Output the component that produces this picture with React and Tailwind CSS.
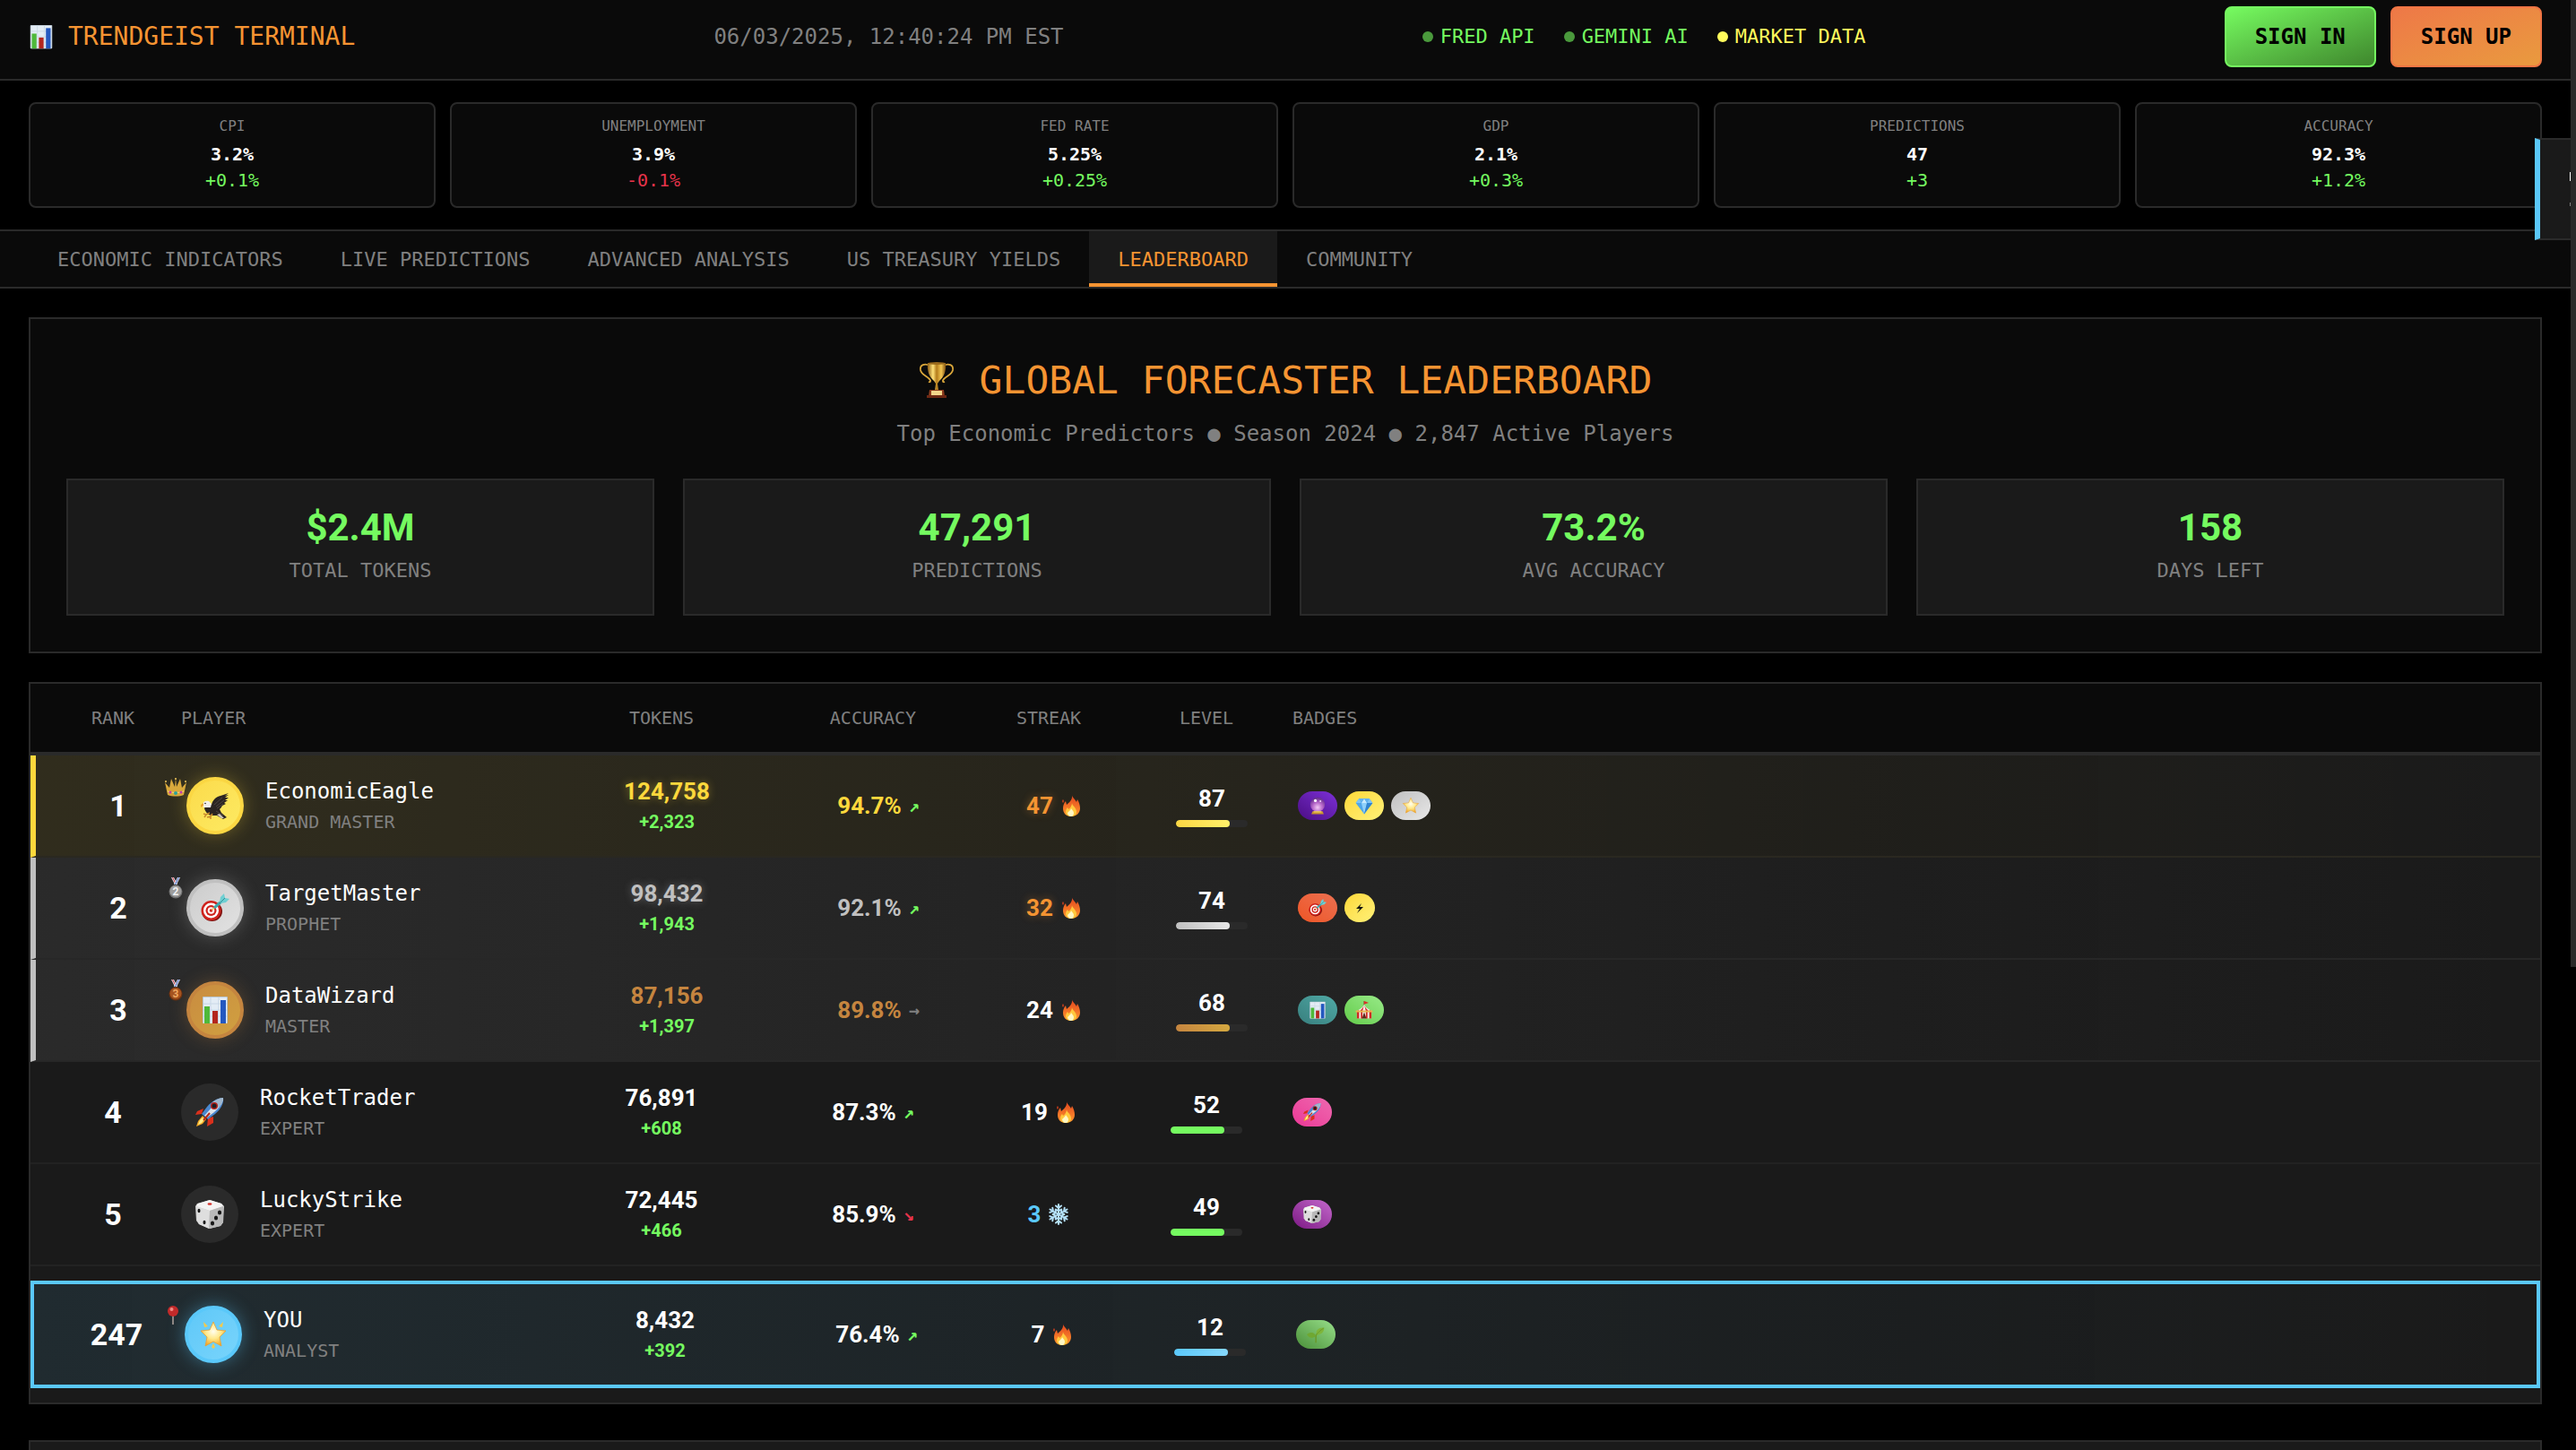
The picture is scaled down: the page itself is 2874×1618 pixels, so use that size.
import React, { useState } from 'react';

const Chart = ({ className }) => (
  <svg className={className} viewBox="0 0 32 32" aria-hidden="true">
    <rect x="2" y="1" width="28" height="30" rx="1" fill="#b9c6d0" />
    <rect x="3" y="2" width="26" height="29" fill="#e3ecf5" />
    <path d="M3 9h26M3 16h26M3 23h26M11 2v29M20 2v29" stroke="#c9d8e6" strokeWidth="1" />
    <rect x="4" y="12" width="6" height="19" fill="#4fb93a" />
    <rect x="13" y="17" width="6" height="14" fill="#b3261e" />
    <rect x="22" y="5" width="6" height="26" fill="#2458c0" />
  </svg>
);

const Trophy = ({ className }) => (
  <svg className={className} viewBox="0 0 40 40" aria-hidden="true">
    <defs>
      <linearGradient id="cup" x1="0" x2="1" y1="0" y2="0">
        <stop offset="0" stopColor="#8a5a12" />
        <stop offset=".3" stopColor="#ffe27a" />
        <stop offset=".5" stopColor="#b37b1b" />
        <stop offset=".75" stopColor="#f3c650" />
        <stop offset="1" stopColor="#7d4d0e" />
      </linearGradient>
    </defs>
    <path d="M12 4C7 1 1 3 2 9c1 5 6 6 10 10 2 2 1 4-1 3M28 4c5-3 11-1 10 5-1 5-6 6-10 10-2 2-1 4 1 3" fill="none" stroke="#d9a63a" strokeWidth="1.800" />
    <path d="M10 1h20c1 9-2 16-7 20l-2 3 1 8h-4l1-8-2-3C12 17 9 10 10 1z" fill="url(#cup)" />
    <ellipse cx="20" cy="1.500" rx="10" ry="1.500" fill="#9a6a1c" />
    <path d="M12 31h16l1 7H11z" fill="#8b3a1c" />
    <rect x="14" y="32" width="12" height="5" fill="#f2d58a" />
    <path d="M9 37h22v3H9z" fill="#6d2814" />
  </svg>
);

const Crown = ({ className }) => (
  <svg className={className} viewBox="0 0 24 24" aria-hidden="true">
    <path d="M3 22L0 8l5 6 2-10 4 9 1-10 1 10 4-9 2 10 5-6-3 14c-5 2-13 2-18 0z" fill="#d9a93c" />
    <path d="M3 18c5 2 13 2 18 0" fill="none" stroke="#f8dc7c" strokeWidth="1" />
    <circle cx="12" cy="20" r="2" fill="#2ba39a" />
    <circle cx="6" cy="19" r="1.500" fill="#c23bb0" />
    <circle cx="18" cy="19" r="1.500" fill="#c23bb0" />
    <circle cx="1" cy="7" r="1" fill="#f3c95c" />
    <circle cx="23" cy="7" r="1" fill="#f3c95c" />
    <circle cx="12" cy="4" r="1" fill="#f3c95c" />
  </svg>
);

const Medal = ({ className, place, light, dark, ink }) => (
  <svg className={className} viewBox="0 0 24 24" aria-hidden="true">
    <path d="M7 0h3l4 8h-3z" fill="#d8dcec" />
    <path d="M8 0h1l4 8h-1z" fill="#d23b3b" />
    <path d="M17 0h-3l-4 8h3z" fill="#e8ebf5" />
    <path d="M16 0h-1l-4 8h1z" fill="#3a5fc2" />
    <circle cx="12" cy="16" r="7.500" fill={dark} />
    <circle cx="12" cy="15.500" r="6.500" fill={light} />
    <text x="12" y="20" textAnchor="middle" fontSize="12" fontWeight="700" fontFamily="Roboto, sans-serif" fill={ink}>
      {place}
    </text>
  </svg>
);

const Silver = ({ className }) => <Medal className={className} place="2" light="#9d9d9d" dark="#6f6f6f" ink="#f1f1f1" />;
const Bronze = ({ className }) => <Medal className={className} place="3" light="#a5531f" dark="#6e3210" ink="#f0a860" />;

const Pin = ({ className }) => (
  <svg className={className} viewBox="0 0 24 24" aria-hidden="true">
    <rect x="10" y="11" width="2" height="12" fill="#8d8683" />
    <circle cx="11" cy="8" r="6" fill="#c22a2a" />
    <circle cx="9.500" cy="6" r="2" fill="#f08a84" />
  </svg>
);

const Eagle = ({ className }) => (
  <svg className={className} viewBox="0 0 32 32" aria-hidden="true">
    <path d="M12 15c1-5 5-9 10-10l9-3-4 3 4-1-4 3 4 0-4 3 3 0-4 3 2 1-4 2c-1 2-2 3-3 4l2 4 6 5-4 2-7-4-6 0c-4-1-7-4-8-8l2-4z" fill="#2b2422" />
    <path d="M15 15l9-8M17 17l9-7M18 19l7-5M17 22l8 5" stroke="#574c47" strokeWidth=".8" />
    <path d="M2 14c1-3 4-4 7-3l3 3-1 4-5 0-3 0z" fill="#f3efe9" />
    <path d="M3 13l-3 2 0 3 3-2z" fill="#eba52c" />
    <circle cx="5" cy="13.500" r=".8" fill="#222" />
    <path d="M10 24l-4 2-3-1m3 1l-2 3m9-4l-2 3-4 1m4-1l0 3" fill="none" stroke="#c98a2b" strokeWidth="1.500" />
    <path d="M21 25l5 5-3 0-5-4z" fill="#cfc6bd" />
  </svg>
);

const Target = ({ className }) => (
  <svg className={className} viewBox="0 0 32 32" aria-hidden="true">
    <ellipse cx="12.500" cy="20" rx="11.500" ry="11" fill="#7d1210" />
    <circle cx="11.500" cy="19" r="11" fill="#cf231d" />
    <circle cx="11.500" cy="19" r="8.500" fill="#fff" />
    <circle cx="11.500" cy="19" r="6" fill="#cf231d" />
    <circle cx="11.500" cy="19" r="3.800" fill="#fff" />
    <circle cx="11.500" cy="19" r="1.800" fill="#cf231d" />
    <path d="M12 18.500L22 10" stroke="#e8c15a" strokeWidth="1.500" />
    <path d="M15 16l8-7" stroke="#3fa7ad" strokeWidth="3" />
    <path d="M21 10l1-6 4-4 1 5 5 1-4 4-6 1z" fill="#6fcfd2" />
    <path d="M21 11l6-6" stroke="#2f8e96" strokeWidth="1" />
  </svg>
);

const Rocket = ({ className }) => (
  <svg className={className} viewBox="0 0 32 32" aria-hidden="true">
    <path d="M9 12l-7 3-2 4 7-1zM20 21l0 7-7 4 1-9z" fill="#d9301c" />
    <path d="M8 20l4 4-4 5-7 3 2-6z" fill="#f7a823" />
    <path d="M8 22l2 2-3 4-4 2 2-5z" fill="#fff08a" />
    <path d="M31 0c1 6-3 13-9 18l-8 6-7-6 6-8C18 4 25 0 31 0z" fill="#4a87cf" />
    <path d="M31 0c0 5-4 11-10 16l-8 6-3-2 8-9C22 6 26 2 31 0z" fill="#dbe3ea" />
    <path d="M31 0c-4 0-9 2-12 5l7 6c3-3 5-7 5-11z" fill="#9fb6cc" />
    <circle cx="21" cy="9" r="4" fill="#b3231c" />
    <circle cx="21" cy="9" r="2.500" fill="#1d1d24" />
    <path d="M16 17l-7 8" stroke="#b5281a" strokeWidth="2" />
  </svg>
);

const Dice = ({ className }) => (
  <svg className={className} viewBox="0 0 32 32" aria-hidden="true">
    <path d="M16 0l13 4 3 3-1 18-3 4-12 3-12-5-3-4L0 7l2-3z" fill="#cfcfcf" />
    <path d="M16 0l13 4 2 3-15 5L1 7l2-3z" fill="#f4f4f4" />
    <path d="M1 7l15 5-1 20L4 27l-2-4z" fill="#dedede" />
    <path d="M31 7l-15 5-1 20 13-3 3-4z" fill="#b9b9b9" />
    <ellipse cx="16" cy="4.500" rx="2.500" ry="1.300" fill="#d5302a" />
    <ellipse cx="4" cy="12" rx="1.500" ry="2.300" fill="#161616" />
    <ellipse cx="10" cy="25" rx="1.500" ry="2.300" fill="#161616" />
    <ellipse cx="27" cy="14" rx="2.100" ry="2.500" fill="#161616" />
    <ellipse cx="23" cy="20" rx="2.100" ry="2.500" fill="#161616" />
    <ellipse cx="19" cy="26" rx="2.100" ry="2.500" fill="#161616" />
  </svg>
);

const StarShape = () => (
  <>
    <defs>
      <radialGradient id="starFill" cx=".5" cy=".4" r=".6">
        <stop offset="0" stopColor="#fffef0" />
        <stop offset=".5" stopColor="#ffe98a" />
        <stop offset="1" stopColor="#f0a52a" />
      </radialGradient>
    </defs>
    <path d="M16 2l4 9 10 1-7 7 2 10-9-5-9 5 2-10-7-7 10-1z" fill="url(#starFill)" stroke="#e8a033" strokeWidth=".8" strokeLinejoin="round" />
  </>
);

const Star = ({ className }) => (
  <svg className={className} viewBox="0 0 32 32" aria-hidden="true">
    <StarShape />
  </svg>
);

const GlowStar = ({ className }) => (
  <svg className={className} viewBox="0 0 32 32" aria-hidden="true">
    <StarShape />
    <path d="M5 2l5 5-4 1zM27 2l-5 5 4 1zM16 26l2 4-2 2-2-2z" fill="#f7c948" />
  </svg>
);

const Fire = ({ className }) => (
  <svg className={className} viewBox="0 0 24 24" aria-hidden="true">
    <defs>
      <linearGradient id="flame" x1="0" x2="0" y1="0" y2="1">
        <stop offset="0" stopColor="#e2431e" />
        <stop offset="1" stopColor="#ff9a2e" />
      </linearGradient>
    </defs>
    <path d="M13 0c0 3 4 5 5 8l1-3c2 3 3 7 3 10 0 5-4 9-10 9S3 20 3 15c0-3 1-6 3-8l1 4c2-2 7-5 6-11z" fill="url(#flame)" />
    <path d="M3 5c1 1 1 3 0 4-1-1-1-3 0-4z" fill="#e2431e" />
    <path d="M13 9c0 3 5 5 5 10 0 3-3 5-6 5s-6-2-6-5c0-2 1-4 2-5l1 2c2-1 4-4 4-7z" fill="#ffc83d" />
    <path d="M12 15c1 2 3 3 3 5s-1 4-3 4-4-2-4-4l2-2c1-1 2-2 2-3z" fill="#fff7c4" />
  </svg>
);

const Snowflake = ({ className }) => (
  <svg className={className} viewBox="0 0 24 24" fill="none" stroke="#b4e0f8" strokeWidth="2" strokeLinecap="round" aria-hidden="true">
    {[0, 60, 120, 180, 240, 300].map((deg) => (
      <g key={deg} transform={`rotate(${deg} 12 12)`}>
        <path d="M12 12V1M12 5l-3-2.500M12 5l3-2.500M12 8.500l-3-2M12 8.500l3-2" />
      </g>
    ))}
  </svg>
);

const CrystalBall = ({ className }) => (
  <svg className={className} viewBox="0 0 32 32" aria-hidden="true">
    <defs>
      <radialGradient id="ball" cx=".5" cy=".7" r=".7">
        <stop offset="0" stopColor="#f3c8f5" />
        <stop offset=".5" stopColor="#b565c8" />
        <stop offset="1" stopColor="#5b2a86" />
      </radialGradient>
    </defs>
    <circle cx="16" cy="14" r="13" fill="url(#ball)" />
    <circle cx="12" cy="7" r="2.500" fill="#fff" />
    <circle cx="21" cy="8" r="1.500" fill="#f6dcff" />
    <path d="M7 26h18l2 5H5z" fill="#c9952f" />
    <path d="M9 26h14v2H9z" fill="#f2cf6b" />
  </svg>
);

const Gem = ({ className }) => (
  <svg className={className} viewBox="0 0 32 32" aria-hidden="true">
    <path d="M7 3h18l6 8-15 20L1 11z" fill="#4fa6ea" />
    <path d="M7 3l4 8H1zM25 3l-4 8h10z" fill="#7fc4f5" />
    <path d="M11 11h10l-5 20z" fill="#8fd0fa" />
    <path d="M11 11l5-8 5 8z" fill="#c9ebff" />
    <path d="M7 3h9l-5 8zM25 3h-9l5 8z" fill="#62b2ee" />
    <path d="M21 11h10L16 31z" fill="#3183cf" />
  </svg>
);

const Bolt = ({ className }) => (
  <svg className={className} viewBox="0 0 10 20" aria-hidden="true">
    <path d="M7 5L1 11l4 0-3 5 7-7-4 0z" fill="#111" />
  </svg>
);

const Circus = ({ className }) => (
  <svg className={className} viewBox="0 0 32 32" aria-hidden="true">
    <path d="M16 0l8 3-8 3z" fill="#d9302a" />
    <path d="M15 0h1v9h-1z" fill="#8a5a32" />
    <path d="M16 6c2 5 6 8 14 12H2C10 14 14 11 16 6z" fill="#f6eee6" />
    <path d="M16 6l-3 12H8c4-4 7-7 8-12zM16 6c1 5 4 8 8 12h-5zM2 18l5-2-1 2zM30 18l-5-2 1 2z" fill="#cf2b26" />
    <path d="M3 19h26v12H3z" fill="#f6eee6" />
    <path d="M3 19h4v12H3zM10 19h3v12h-3zM19 19h3v12h-3zM25 19h4v12h-4z" fill="#cf2b26" />
    <path d="M16 20l4 11h-8z" fill="#5d2a1c" />
    <path d="M1 17h30v3H1z" fill="#e7b64d" />
  </svg>
);

const Seedling = ({ className }) => (
  <svg className={className} viewBox="0 0 32 32" aria-hidden="true">
    <path d="M16 30c1-6-1-9 1-14" fill="none" stroke="#6a9a2c" strokeWidth="2.500" strokeLinecap="round" />
    <path d="M17 17C15 8 22 3 31 4c0 8-6 13-14 13z" fill="#7fb53a" />
    <path d="M17 17c3-5 8-9 13-12" stroke="#5d8f24" strokeWidth="1" fill="none" />
    <path d="M16 19C14 12 7 11 0 16c3 6 10 8 16 3z" fill="#6fa832" />
  </svg>
);

const sources = [
  { name: 'FRED API', text: 'text-[#75fb60]', dot: 'bg-[#4a993c]' },
  { name: 'GEMINI AI', text: 'text-[#75fb60]', dot: 'bg-[#4a993c]' },
  { name: 'MARKET DATA', text: 'text-[#fffb5c]', dot: 'bg-[#fffb5c]' },
];

const tickers = [
  { label: 'CPI', value: '3.2%', change: '+0.1%' },
  { label: 'UNEMPLOYMENT', value: '3.9%', change: '-0.1%' },
  { label: 'FED RATE', value: '5.25%', change: '+0.25%' },
  { label: 'GDP', value: '2.1%', change: '+0.3%' },
  { label: 'PREDICTIONS', value: '47', change: '+3' },
  { label: 'ACCURACY', value: '92.3%', change: '+1.2%' },
];

const tabs = ['ECONOMIC INDICATORS', 'LIVE PREDICTIONS', 'ADVANCED ANALYSIS', 'US TREASURY YIELDS', 'LEADERBOARD', 'COMMUNITY'];

const stats = [
  { value: '$2.4M', label: 'TOTAL TOKENS' },
  { value: '47,291', label: 'PREDICTIONS' },
  { value: '73.2%', label: 'AVG ACCURACY' },
  { value: '158', label: 'DAYS LEFT' },
];

const goldFill = 'bg-linear-to-br from-[#fdd835] to-[#fff176]';
const silverFill = 'bg-linear-to-br from-[#c0c0c0] to-[#e8e8e8]';
const plainRow = 'border-b-2 border-b-[#222222]';

const players = [
  {
    rank: 1, name: 'EconomicEagle', title: 'GRAND MASTER', tokens: '124,758', gain: '+2,323', accuracy: '94.7%', trend: 'up', streak: 47, level: 87,
    row: 'border-b-2 border-b-[#2a2820] border-l-6 border-l-[#fdd83c] bg-linear-to-r from-[#fdd83c]/10 to-transparent',
    avatar: 'border-4 border-[#fbd743] bg-linear-to-br from-[#fbdb4b] to-[#fdea62] shadow-[0_0_20px_rgba(253,216,60,0.3)]',
    icon: Eagle, mark: Crown,
    score: 'text-[#fdd83c] [text-shadow:0_0_10px_rgba(253,216,60,0.4)]', acc: 'text-[#fdd83c]', hot: true,
    bar: 'bg-linear-to-r from-[#fbd743] to-[#fff06a]',
    badges: [
      { icon: CrystalBall, fill: 'bg-linear-to-tr from-[#4b0d84] to-[#7d30d8]' },
      { icon: Gem, fill: goldFill },
      { icon: Star, fill: silverFill },
    ],
  },
  {
    rank: 2, name: 'TargetMaster', title: 'PROPHET', tokens: '98,432', gain: '+1,943', accuracy: '92.1%', trend: 'up', streak: 32, level: 74,
    row: 'border-b-2 border-b-[#272727] border-l-6 border-l-[#c0c0c0] bg-linear-to-r from-[#c0c0c0]/10 to-transparent',
    avatar: 'border-4 border-[#c0c0c0] bg-linear-to-br from-[#cccccc] to-[#e2e2e2] shadow-[0_0_20px_rgba(192,192,192,0.3)]',
    icon: Target, mark: Silver,
    score: 'text-[#c0c0c0] [text-shadow:0_0_10px_rgba(192,192,192,0.4)]', acc: 'text-[#c0c0c0]', hot: true,
    bar: 'bg-linear-to-r from-[#c0c0c0] to-[#e8e8e8]',
    badges: [
      { icon: Target, fill: 'bg-linear-to-tr from-[#ee5523] to-[#ec7050]' },
      { icon: Bolt, fill: goldFill, narrow: true },
    ],
  },
  {
    rank: 3, name: 'DataWizard', title: 'MASTER', tokens: '87,156', gain: '+1,397', accuracy: '89.8%', trend: 'flat', streak: 24, level: 68,
    row: 'border-b-2 border-b-[#272727] border-l-6 border-l-[#c0c0c0] bg-linear-to-r from-[#c0c0c0]/10 to-transparent',
    avatar: 'border-4 border-[#c5853f] bg-linear-to-br from-[#c98c40] to-[#d0a040] shadow-[0_0_20px_rgba(197,133,63,0.3)]',
    icon: Chart, mark: Bronze,
    score: 'text-[#c5853f]', acc: 'text-[#c5853f]',
    bar: 'bg-linear-to-r from-[#c5853f] to-[#d4a840]',
    badges: [
      { icon: Chart, fill: 'bg-linear-to-tr from-[#387f7e] to-[#50aaa6]' },
      { icon: Circus, fill: 'bg-linear-to-tr from-[#62cc48] to-[#98ea88]' },
    ],
  },
  {
    rank: 4, name: 'RocketTrader', title: 'EXPERT', tokens: '76,891', gain: '+608', accuracy: '87.3%', trend: 'up', streak: 19, level: 52,
    row: plainRow, avatar: 'bg-[#2a2a2a]', icon: Rocket, score: 'text-white', acc: 'text-white', bar: 'bg-[#75fb60]',
    badges: [{ icon: Rocket, fill: 'bg-linear-to-tr from-[#eb3596] to-[#ee68b0]' }],
  },
  {
    rank: 5, name: 'LuckyStrike', title: 'EXPERT', tokens: '72,445', gain: '+466', accuracy: '85.9%', trend: 'down', streak: 3, cold: true, level: 49,
    row: plainRow, avatar: 'bg-[#2a2a2a]', icon: Dice, score: 'text-white', acc: 'text-white', bar: 'bg-[#75fb60]',
    badges: [{ icon: Dice, fill: 'bg-linear-to-tr from-[#7c1584] to-[#c468cc]' }],
  },
  {
    rank: 247, name: 'YOU', title: 'ANALYST', tokens: '8,432', gain: '+392', accuracy: '76.4%', trend: 'up', streak: 7, level: 12,
    row: 'my-4 border-4 border-[#5ac8fa] bg-linear-to-r from-[#5ac8fa]/10 to-transparent',
    avatar: 'border-4 border-[#5ac8fa] bg-linear-to-br from-[#5fc8f8] to-[#78d4fb] shadow-[0_0_20px_rgba(90,200,250,0.4)]',
    icon: GlowStar, mark: Pin, score: 'text-white', acc: 'text-white',
    bar: 'bg-linear-to-r from-[#5ac8fa] to-[#85d8fd]',
    badges: [{ icon: Seedling, fill: 'bg-linear-to-tr from-[#4a8f38] to-[#98e08a]' }],
  },
];

const trends = {
  up: { glyph: '↗', color: 'text-[#75fb60]' },
  down: { glyph: '↘', color: 'text-[#e6334a]' },
  flat: { glyph: '→', color: 'text-[#808080]' },
};

const columns = 'grid grid-cols-[120px_400px_240px_200px_160px_160px_1fr] items-center gap-4 px-8';

function PlayerRow({ player }) {
  const Icon = player.icon;
  const Mark = player.mark;
  const trend = trends[player.trend];
  const streakColor = player.hot
    ? 'text-[#f59432] [text-shadow:0_0_10px_rgba(245,148,50,0.4)]'
    : player.cold
      ? 'text-[#5ac8fa]'
      : 'text-white';

  return (
    <tr className={`${columns} h-[114px] ${player.rank === 247 ? 'min-h-[120px]' : ''} ${player.row}`}>
      <td className="text-center font-[Roboto,sans-serif] text-[34px] leading-10 font-bold">{player.rank}</td>
      <td className="flex items-center gap-6">
        <div className={`relative flex size-16 items-center justify-center rounded-full ${player.avatar}`}>
          <Icon className="size-8" />
          {Mark && <Mark className="absolute -top-1.5 -left-7 size-6" />}
        </div>
        <div>
          <div className="text-[24px] leading-9">{player.name}</div>
          <div className="text-[20px] leading-8 text-[#808080]">{player.title}</div>
        </div>
      </td>
      <td className="text-center font-[Roboto,sans-serif] font-bold">
        <div className={`text-[26px] leading-9 ${player.score}`}>{player.tokens}</div>
        <div className="text-[20px] leading-8 text-[#75fb60]">{player.gain}</div>
      </td>
      <td className="flex items-center justify-center gap-2">
        <span className={`font-[Roboto,sans-serif] text-[26px] leading-9 font-bold ${player.acc}`}>{player.accuracy}</span>
        <span className={`text-[20px] leading-9 font-bold ${trend.color}`}>{trend.glyph}</span>
      </td>
      <td className="flex items-center justify-center gap-2">
        <span className={`font-[Roboto,sans-serif] text-[26px] leading-9 font-bold ${streakColor}`}>{player.streak}</span>
        {player.cold ? <Snowflake className="size-6" /> : <Fire className="size-6" />}
      </td>
      <td className="flex flex-col items-center gap-2">
        <span className="font-[Roboto,sans-serif] text-[26px] leading-8 font-bold">{player.level}</span>
        <div className="h-2 w-20 overflow-hidden rounded-full bg-[#2a2a2a]">
          <div className={`h-full w-3/4 rounded-full ${player.bar}`} />
        </div>
      </td>
      <td className="flex items-center gap-2">
        {player.badges.map((badge, i) => {
          const BadgeIcon = badge.icon;
          return (
            <span key={i} className={`flex h-8 items-center rounded-full px-3 ${badge.fill}`}>
              <BadgeIcon className={badge.narrow ? 'h-5 w-[10px]' : 'size-5'} />
            </span>
          );
        })}
      </td>
    </tr>
  );
}

export default function App() {
  const [activeTab, setActiveTab] = useState('LEADERBOARD');

  return (
    <div className="flex h-screen overflow-hidden bg-black font-['DejaVu_Sans_Mono',monospace] text-white">
      <div className="relative min-w-0 flex-1 overflow-hidden">
        <header className="flex items-center justify-between border-b-2 border-[#2a2a2a] bg-[#0a0a0a] px-8 pt-[7px] pb-[13px]">
          <div className="flex items-center gap-4 text-[28px] leading-10 text-[#f59432]">
            <Chart className="size-7" />
            <span>TRENDGEIST TERMINAL</span>
          </div>
          <time className="text-[24px] leading-8 text-[#808080]">06/03/2025, 12:40:24 PM EST</time>
          <div className="flex gap-8 text-[22px] leading-8">
            {sources.map((source) => (
              <span key={source.name} className={`flex items-center gap-2 ${source.text}`}>
                <span className={`size-3 rounded-full ${source.dot}`} />
                {source.name}
              </span>
            ))}
          </div>
          <div className="flex gap-4 text-[24px] leading-8 font-bold text-black">
            <button type="button" className="rounded-lg border-2 border-[#75fb60] bg-linear-to-br from-[#76fb60] to-[#3f872d] px-8 py-4">
              SIGN IN
            </button>
            <button type="button" className="rounded-lg border-2 border-[#f07544] bg-linear-to-br from-[#ee7847] to-[#e99a3e] px-8 py-4">
              SIGN UP
            </button>
          </div>
        </header>

        <section className="grid grid-cols-6 gap-4 px-8 py-6 text-center">
          {tickers.map((item) => (
            <div key={item.label} className="rounded-lg border-2 border-[#2a2a2a] bg-[#0a0a0a] pt-3 pb-[14px]">
              <div className="text-[16px] leading-[26px] text-[#808080]">{item.label}</div>
              <div className="mt-1 text-[20px] leading-7 font-bold">{item.value}</div>
              <div className={`text-[20px] leading-[30px] ${item.change.startsWith('-') ? 'text-[#e6334a]' : 'text-[#75fb60]'}`}>
                {item.change}
              </div>
            </div>
          ))}
        </section>

        <nav className="flex border-y-2 border-[#2a2a2a] bg-[#0a0a0a] px-8">
          {tabs.map((tab) => (
            <button
              key={tab}
              type="button"
              onClick={() => setActiveTab(tab)}
              className={`border-b-4 px-8 pt-4 pb-[10px] text-[22px] leading-8 ${
                tab === activeTab ? 'border-[#f59432] bg-[#1a1a1a] text-[#f59432]' : 'border-transparent text-[#808080]'
              }`}
            >
              {tab}
            </button>
          ))}
        </nav>

        <main className="p-8">
          <section className="border-2 border-[#2a2a2a] bg-[#0a0a0a] p-10 text-center">
            <h1 className="flex items-center justify-center gap-7 text-[43px] leading-[56px] text-[#f59432]">
              <Trophy className="size-10" />
              GLOBAL FORECASTER LEADERBOARD
            </h1>
            <p className="mt-3 text-[24px] leading-10 text-[#808080]">
              Top Economic Predictors ● Season 2024 ● 2,847 Active Players
            </p>
            <div className="mt-[30px] grid grid-cols-4 gap-8">
              {stats.map((stat) => (
                <div key={stat.label} className="border-2 border-[#2a2a2a] bg-[#1a1a1a] pt-[26px] pb-[31px]">
                  <div className="font-[Roboto,sans-serif] text-[42px] leading-[54px] font-bold text-[#75fb60]">{stat.value}</div>
                  <div className="mt-1 text-[22px] leading-[34px] text-[#808080]">{stat.label}</div>
                </div>
              ))}
            </div>
          </section>

          <table className="mt-8 block border-2 border-[#2a2a2a] bg-[#1a1a1a]">
            <thead className="block border-b-4 border-[#2a2a2a] bg-[#0a0a0a] py-6 text-[20px] leading-7 text-[#808080]">
              <tr className={columns}>
                <th className="font-normal">RANK</th>
                <th className="text-left font-normal">PLAYER</th>
                <th className="font-normal">TOKENS</th>
                <th className="font-normal">ACCURACY</th>
                <th className="font-normal">STREAK</th>
                <th className="font-normal">LEVEL</th>
                <th className="text-left font-normal">BADGES</th>
              </tr>
            </thead>
            <tbody className="block">
              {players.map((player) => (
                <PlayerRow key={player.rank} player={player} />
              ))}
            </tbody>
          </table>

          <section className="mt-10 min-h-40 border-2 border-[#2a2a2a] bg-[#1a1a1a]" />
        </main>

        {/* toast sliding in from the right edge */}
        <div className="absolute top-[154px] right-0 flex h-[114px] w-10 flex-col items-end gap-6 border-y-2 border-l-6 border-y-[#2a2a2a] border-l-[#5ac8fa] bg-[#1a1a1a] pt-9">
          <span className="h-[10px] w-px bg-white" />
          <span className="h-1 w-px bg-[#808080]" />
        </div>
      </div>

      <div className="w-[6px] bg-black">
        <div className="h-2/3 bg-[#2a2a2a]" />
      </div>
    </div>
  );
}
